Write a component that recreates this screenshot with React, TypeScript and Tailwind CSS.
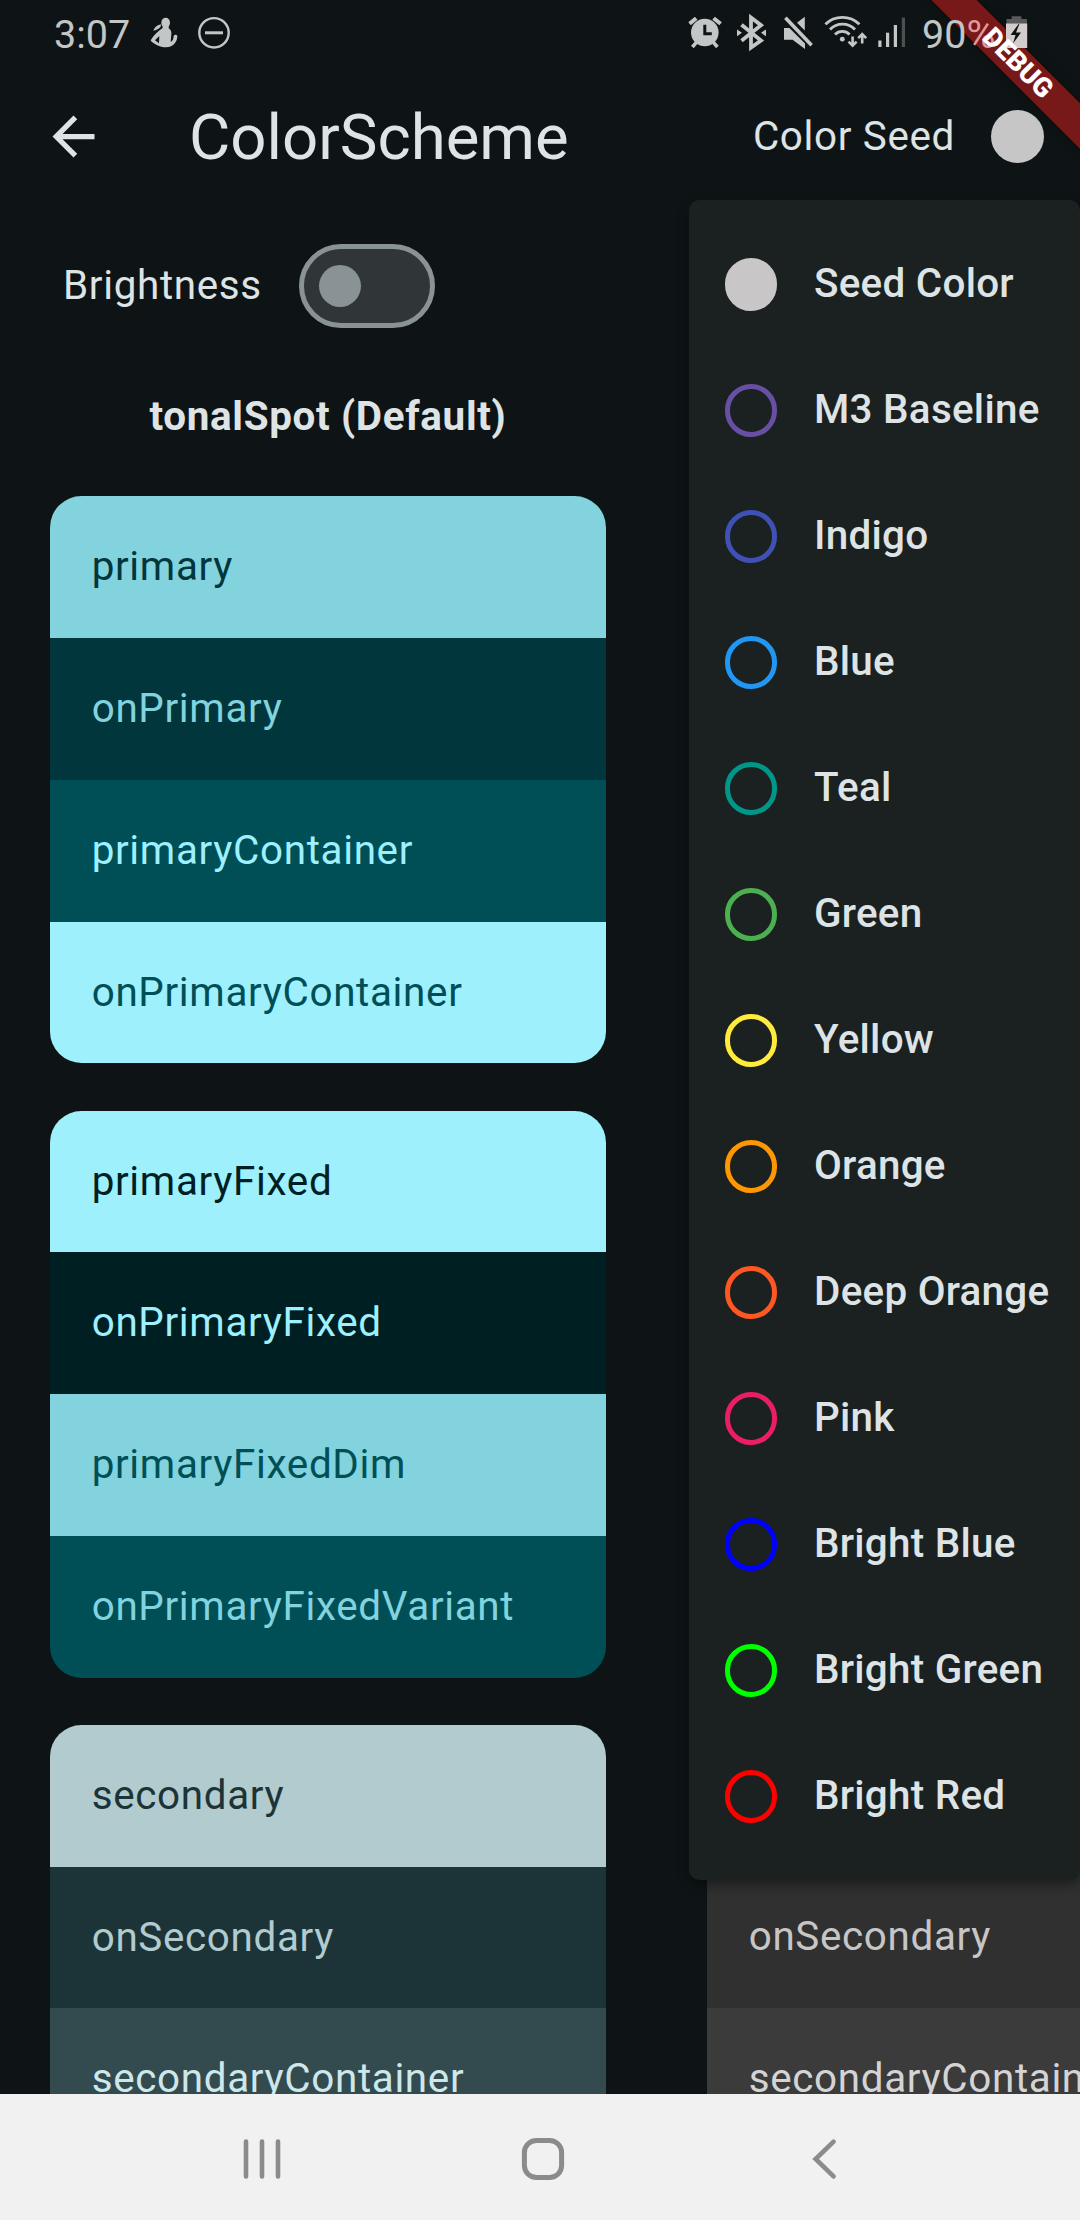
import React from "react";

type Row = { name: string; bg: string; fg: string };

const tonalSpot: Row[][] = [
  [
    { name: "primary", bg: "bg-[#82d3de]", fg: "text-[#00363c]" },
    { name: "onPrimary", bg: "bg-[#00363c]", fg: "text-[#82d3de]" },
    { name: "primaryContainer", bg: "bg-[#004f56]", fg: "text-[#9ef0fd]" },
    { name: "onPrimaryContainer", bg: "bg-[#9ef0fd]", fg: "text-[#004f56]" },
  ],
  [
    { name: "primaryFixed", bg: "bg-[#9ef0fd]", fg: "text-[#001f23]" },
    { name: "onPrimaryFixed", bg: "bg-[#001f23]", fg: "text-[#9ef0fd]" },
    { name: "primaryFixedDim", bg: "bg-[#82d3de]", fg: "text-[#004f56]" },
    { name: "onPrimaryFixedVariant", bg: "bg-[#004f56]", fg: "text-[#82d3de]" },
  ],
  [
    { name: "secondary", bg: "bg-[#b1cbcf]", fg: "text-[#1c3437]" },
    { name: "onSecondary", bg: "bg-[#1c3437]", fg: "text-[#b1cbcf]" },
    { name: "secondaryContainer", bg: "bg-[#334b4e]", fg: "text-[#cde7eb]" },
  ],
];

const monochrome: Row[] = [
  { name: "onSecondary", bg: "bg-[#303030]", fg: "text-[#c6c6c6]" },
  { name: "secondaryContainer", bg: "bg-[#3b3b3b]", fg: "text-[#d4d4d4]" },
];

const seeds = [
  { name: "Seed Color", ring: "border-[#c8c6c6] bg-[#c8c6c6]" },
  { name: "M3 Baseline", ring: "border-[#6750a4]" },
  { name: "Indigo", ring: "border-[#3f51b5]" },
  { name: "Blue", ring: "border-[#2196f3]" },
  { name: "Teal", ring: "border-[#009688]" },
  { name: "Green", ring: "border-[#4caf50]" },
  { name: "Yellow", ring: "border-[#ffeb3b]" },
  { name: "Orange", ring: "border-[#ff9800]" },
  { name: "Deep Orange", ring: "border-[#ff5722]" },
  { name: "Pink", ring: "border-[#e91e63]" },
  { name: "Bright Blue", ring: "border-[#0000ff]" },
  { name: "Bright Green", ring: "border-[#00ff00]" },
  { name: "Bright Red", ring: "border-[#ff0000]" },
];

function StatusBar() {
  return (
    <div className="relative z-10 flex h-[63px] shrink-0 items-center justify-between pl-[54px] pr-[52px] pt-[7px] text-[39.5px] leading-[48px] text-[#c3c6c6]">
      <div className="flex items-center">
        <span className="w-[96px]">3:07</span>
        {/* Notification: figure and do-not-disturb */}
        <svg className="h-[48px] w-[82px]" viewBox="150 11 82 48">
          <g transform="translate(140 8) scale(.3333)" fill="currentColor">
            <ellipse cx="77" cy="44" rx="13" ry="15" />
            <path d="M68 50h18v14h-18z" />
            <path d="M40 68c4-11 12-17 24-19l-3 9c-6 5-13 9-21 10z" />
            <path fillRule="evenodd" d="M68 60h16c8 4 11 10 10 18l-2 24c6-3 9-9 9-18 2-4 8-5 11-1 0 17-10 34-34 35-14 0-30-6-46-20 3-9 20-28 36-38zM58 84L45 97l12 9z" />
          </g>
          <circle cx="214" cy="32.8" r="14.7" fill="none" stroke="currentColor" strokeWidth="2.4" />
          <path d="M205 32.8h18" stroke="currentColor" strokeWidth="3" />
        </svg>
      </div>
      <div className="flex items-center">
        {/* Alarm */}
        <svg className="h-[48px] w-[48px]" viewBox="688 11 48 48" fill="none" stroke="currentColor">
          <circle cx="704.8" cy="32.5" r="13.8" fill="currentColor" stroke="none" />
          <path d="M704.8 24.8v9h7" stroke="#0e1415" strokeWidth="3" />
          <path d="M689.6 23.8l6.6-5.6M713.6 18.2l7 5.6" strokeWidth="4" />
          <path d="M692.4 47l4-4.6M717.4 47l-4-4.6" strokeWidth="3.6" />
        </svg>
        {/* Bluetooth connected */}
        <svg className="h-[48px] w-[46px]" viewBox="736 11 46 48">
          <path d="M741.5 24.8L761 40.5l-10 7V17.6l10 7.6-19.5 15.6" fill="none" stroke="currentColor" strokeWidth="3.8" />
          <path d="M737 29.4l5 3.4-5 3.4zM766 29.4l-5 3.4 5 3.4z" fill="currentColor" />
        </svg>
        {/* Muted */}
        <svg className="h-[48px] w-[41px]" viewBox="782 11 41 48">
          <path d="M784 28h5.4l15.6 15.6V49l-12.4-9.2H784zM797 22.8l7.8-6v13.6z" fill="currentColor" />
          <path d="M785.4 17.8L811.6 45.2" stroke="currentColor" strokeWidth="3.6" />
        </svg>
        {/* Wi-Fi with traffic arrows */}
        <svg className="h-[48px] w-[53px]" viewBox="823 11 53 48" fill="none" stroke="currentColor" strokeWidth="2.9">
          <path d="M825.4 24.2a24.5 24.5 0 0 1 34 0M830 29.4a17.5 17.5 0 0 1 25 0M835 34.4a10.3 10.3 0 0 1 14.6 0" />
          <circle cx="842.3" cy="39.2" r="2.4" fill="currentColor" stroke="none" />
          <path d="M852.6 36.4v9M848.6 41.6l4 4 4-4M862.2 43.4v-9M858.2 38.2l4-4 4 4" strokeWidth="2.6" />
        </svg>
        {/* Signal */}
        <svg className="h-[48px] w-[46px]" viewBox="876 11 46 48" fill="currentColor">
          <rect x="878.3" y="40.5" width="3.2" height="6.5" />
          <rect x="886" y="32.7" width="3.2" height="14.3" />
          <rect x="893.8" y="25" width="3.2" height="22" />
          <rect x="901.8" y="17.5" width="3.2" height="29.5" fill="#4b5051" />
        </svg>
        <span className="w-[84px]">
          90<span className="text-[#e3989a]">%</span>
        </span>
        {/* Battery charging */}
        <svg className="h-[48px] w-[22px]" viewBox="1006 11 22 48">
          <path d="M1011.7 16.3h9.6V19h5.6v4.6h-20.4V19h5.2z" fill="#5a5a5a" />
          <path d="M1006 23.4h21.2V48H1006z" fill="#d2cccc" />
          <path d="M1018.6 24l-8 11h5l-2.6 8.6 8-11h-5l3.4-8.6z" fill="#0e1112" />
        </svg>
      </div>
    </div>
  );
}

function AppBar() {
  return (
    <header className="flex h-[147px] shrink-0 items-center pl-[42px] pr-[36.5px] text-[#dee3e5]">
      <svg className="h-[63px] w-[63px]" viewBox="0 0 24 24" fill="currentColor">
        <path d="M20 11H7.83l5.59-5.59L12 4l-8 8 8 8 1.41-1.41L7.83 13H20v-2z" />
      </svg>
      <h1 className="ml-[84px] grow pt-[2px] text-[63.5px] leading-none">ColorScheme</h1>
      <span className="mr-[36px] pt-[1px] text-[40.4px] tracking-[0.66px]">Color Seed</span>
      <span className="h-[52.5px] w-[52.5px] rounded-full bg-[#c6c6c6]" />
    </header>
  );
}

function Swatch({ row }: { row: Row }) {
  return (
    <div className={`flex h-[141.75px] items-center pl-[42px] pt-[1px] text-[40.4px] tracking-[0.66px] ${row.bg} ${row.fg}`}>{row.name}</div>
  );
}

function SeedMenu() {
  return (
    <ul className="absolute left-[688.5px] top-[199.5px] flex h-[1680px] w-[391.5px] flex-col rounded-[10.5px] bg-[#1b2021] pt-[22px] shadow-[0_5px_12px_rgba(0,0,0,0.4)]">
      {seeds.map((s) => (
        <li key={s.name} className="flex h-[126px] items-center whitespace-nowrap pl-[36px] text-[40.4px] font-medium tracking-[0.26px] text-[#dee3e5]">
          <span className={`mr-[37px] h-[52.5px] w-[52.5px] shrink-0 rounded-full border-[5.25px] ${s.ring}`} />
          {s.name}
        </li>
      ))}
    </ul>
  );
}

function DebugBanner() {
  return (
    <>
      <div className="absolute left-[867px] top-[46.5px] h-[32px] w-[300px] rotate-45 bg-[#781919] shadow-[0_0_10px_rgba(0,0,0,0.5)]" />
      <div className="absolute left-[867.5px] top-[46.5px] z-20 flex h-[32px] w-[300px] rotate-45 items-center justify-center text-[27px] leading-none font-black text-white">
        DEBUG
      </div>
    </>
  );
}

function NavBar() {
  return (
    <nav className="flex h-[126px] shrink-0 items-center bg-[#f1f1f1] pl-[240px] pt-[4px]">
      <svg className="h-[44px] w-[44px]" viewBox="240 43 44 44" stroke="#8b8b8b" strokeWidth="4.6" strokeLinecap="round">
        <path d="M246 47.5v35M262 47.5v35M278 47.5v35" />
      </svg>
      <svg className="ml-[237px] h-[44px] w-[44px]" viewBox="521 43 44 44" fill="none" stroke="#8b8b8b" strokeWidth="5">
        <rect x="524.4" y="46.4" width="37.2" height="37.2" rx="12" />
      </svg>
      <svg className="ml-[243px] h-[44px] w-[32px]" viewBox="808 43 32 44" fill="none" stroke="#8b8b8b" strokeWidth="4.6" strokeLinecap="round">
        <path d="M833.6 47.6L815.6 65l18 17.4" />
      </svg>
    </nav>
  );
}

export default function App() {
  return (
    <div className="relative flex h-[2220px] w-[1080px] flex-col overflow-hidden bg-[#0e1415] font-['Roboto',sans-serif]">
      <StatusBar />
      <AppBar />
      <main className="flex min-h-0 grow flex-col overflow-hidden">
        <div className="mt-[34px] flex h-[84px] shrink-0 items-center pl-[63px] text-[40.4px] tracking-[0.66px] text-[#dee3e5]">
          <span className="w-[235.5px]">Brightness</span>
          <span className="flex h-[84px] w-[136.5px] items-center rounded-full border-[5.25px] border-[#899294] bg-[#303637] pl-[15.75px]">
            <span className="h-[42px] w-[42px] rounded-full bg-[#899294]" />
          </span>
        </div>
        <div className="mt-[46.5px] flex gap-[100.5px] pl-[49.7px]">
          <section className="flex w-[556.5px] shrink-0 flex-col">
            <h2 className="flex h-[85px] items-center justify-center text-[40.4px] font-bold tracking-[0.66px] text-[#dee3e5]">
              tonalSpot (Default)
            </h2>
            <div className="mt-[36.9px] flex flex-col gap-[47.25px]">
              {tonalSpot.map((rows, i) => (
                <div key={i} className="overflow-hidden rounded-[31.5px]">
                  {rows.map((r) => (
                    <Swatch key={r.name} row={r} />
                  ))}
                </div>
              ))}
            </div>
          </section>
          <section className="flex w-[556.5px] shrink-0 flex-col pt-[1491.9px]">
            {monochrome.map((r) => (
              <Swatch key={r.name} row={r} />
            ))}
          </section>
        </div>
      </main>
      <NavBar />
      <SeedMenu />
      <DebugBanner />
    </div>
  );
}
